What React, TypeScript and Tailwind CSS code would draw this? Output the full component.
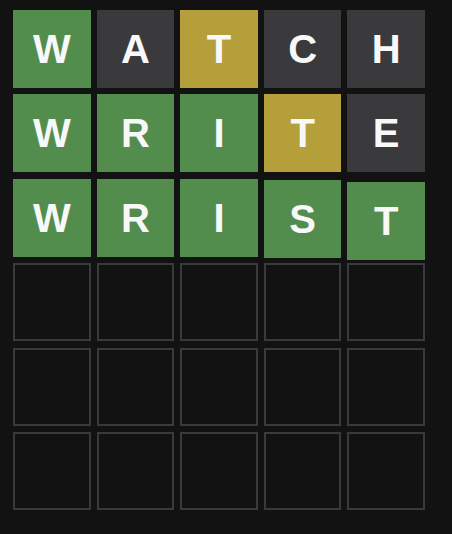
type TileState = 'correct' | 'present' | 'absent' | 'empty';

const rows: { letter: string; state: TileState }[][] = [
  [
    { letter: 'W', state: 'correct' },
    { letter: 'A', state: 'absent' },
    { letter: 'T', state: 'present' },
    { letter: 'C', state: 'absent' },
    { letter: 'H', state: 'absent' },
  ],
  [
    { letter: 'W', state: 'correct' },
    { letter: 'R', state: 'correct' },
    { letter: 'I', state: 'correct' },
    { letter: 'T', state: 'present' },
    { letter: 'E', state: 'absent' },
  ],
  [
    { letter: 'W', state: 'correct' },
    { letter: 'R', state: 'correct' },
    { letter: 'I', state: 'correct' },
    { letter: 'S', state: 'correct' },
    { letter: 'T', state: 'correct' },
  ],
];

const empty = Array.from({ length: 5 }, () => ({ letter: '', state: 'empty' as TileState }));
const board = [...rows, empty, empty, empty];

const stateClass: Record<TileState, string> = {
  correct: 'bg-[#538d4e]',
  present: 'bg-[#b59f3b]',
  absent: 'bg-[#3a3a3c]',
  empty: 'border-2 border-[#3a3a3c]',
};

// the winning row is mid-bounce in the screenshot
const bounce: Record<string, string> = {
  '2-3': 'translate-y-[1px]',
  '2-4': 'translate-y-[3px]',
};

export default function App() {
  return (
    <main className="min-h-screen w-full bg-[#121213] pt-[10px] pl-[13px]">
      <div className="grid w-[412px] grid-cols-5 gap-x-[6px] gap-y-[6.4px]">
        {board.map((row, r) =>
          row.map((tile, c) => (
            <div
              key={`${r}-${c}`}
              className={`flex h-[78px] items-center justify-center ${stateClass[tile.state]} ${bounce[`${r}-${c}`] ?? ''}`}
            >
              <span
                className="text-[40px] font-bold uppercase leading-none text-[#f8f8f8]"
                style={{ fontFamily: '"Liberation Sans", Arial, sans-serif' }}
              >
                {tile.letter}
              </span>
            </div>
          ))
        )}
      </div>
    </main>
  );
}
